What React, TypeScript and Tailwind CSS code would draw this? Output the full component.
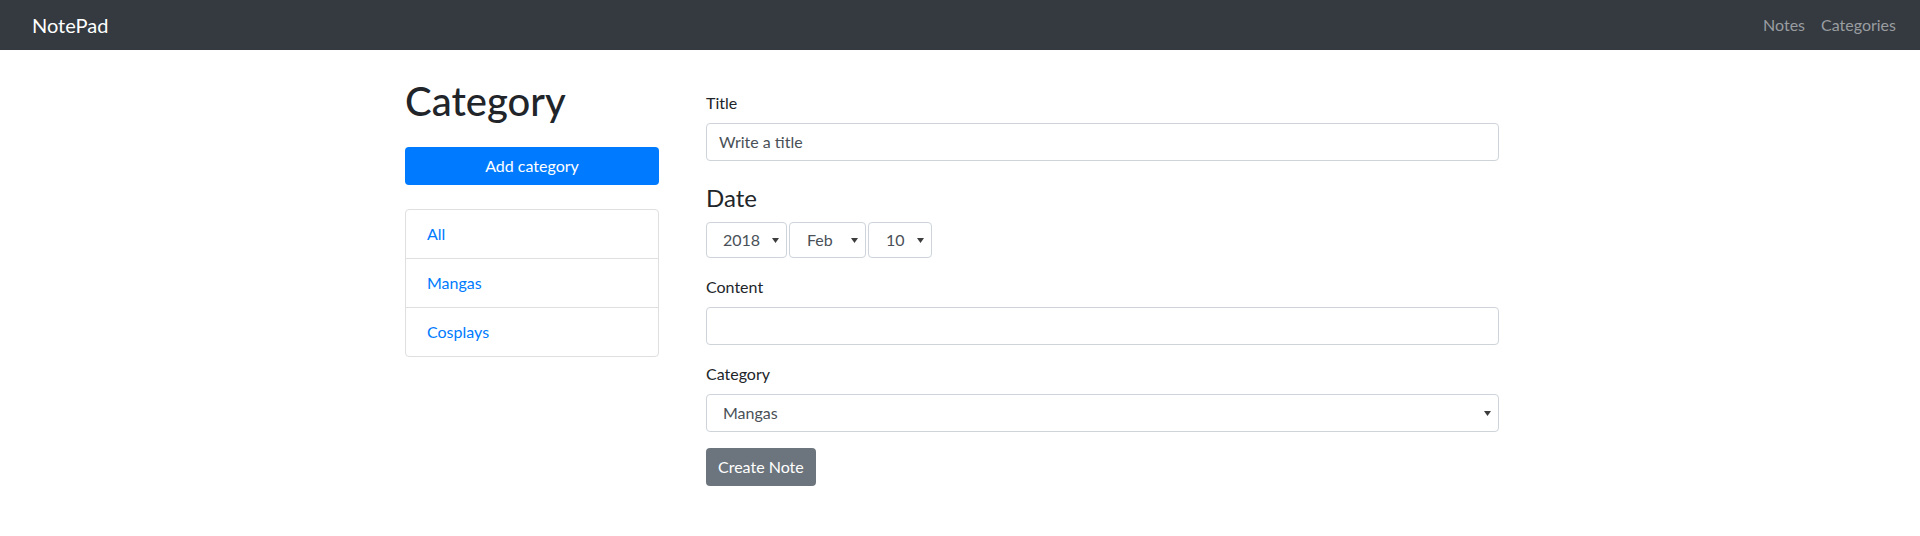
import React from "react";

function Caret() {
  return (
    <svg width="7" height="5" viewBox="0 0 7 5" className="shrink-0">
      <path d="M0 0 L7 0 L3.5 5 Z" fill="#3d3d3d" />
    </svg>
  );
}

function DateSelect({ value, w, textPad }: { value: string; w: string; textPad: string }) {
  return (
    <div className={`${w} h-[36px] border border-[#ced4da] rounded-[4px] flex items-center justify-between pr-[7px] ${textPad} text-[#495057]`}>
      <span>{value}</span>
      <Caret />
    </div>
  );
}

export default function App() {
  return (
    <div className="min-h-[536px] bg-white text-[16px] text-[#212529]" style={{ fontFamily: 'Lato, sans-serif' }}>
      <nav className="h-[50px] bg-[#343a40] flex items-center justify-between pl-[32px] pr-[24px]">
        <span className="text-white text-[20px]">NotePad</span>
        <div className="flex gap-[16px] text-[#9a9da0]">
          <span>Notes</span>
          <span>Categories</span>
        </div>
      </nav>
      <div className="w-[1110px] mx-auto flex">
        <div className="w-[254px] shrink-0">
          <h1 className="text-[40px] leading-[48px] font-medium mt-[27px]">Category</h1>
          <button className="mt-[22px] w-full h-[38px] bg-[#007bff] text-white rounded-[4px]">Add category</button>
          <div className="mt-[24px] border border-[#dfdfdf] rounded-[4px] text-[#007bff]">
            <div className="h-[49px] flex items-center px-[21px] border-b border-[#dfdfdf]">All</div>
            <div className="h-[49px] flex items-center px-[21px] border-b border-[#dfdfdf]">Mangas</div>
            <div className="h-[48px] flex items-center px-[21px]">Cosplays</div>
          </div>
        </div>
        <div className="w-[793px] ml-[47px] pt-[41px]">
          <div className="leading-[24px]">Title</div>
          <div className="mt-[8px] h-[38px] border border-[#ced4da] rounded-[4px] flex items-center px-[12px] text-[#495057]">Write a title</div>
          <h4 className="mt-[22px] text-[24px] leading-[29px] font-normal">Date</h4>
          <div className="mt-[10px] flex gap-[2px]">
            <DateSelect value="2018" w="w-[81px]" textPad="pl-[16px]" />
            <DateSelect value="Feb" w="w-[77px]" textPad="pl-[17px]" />
            <DateSelect value="10" w="w-[64px]" textPad="pl-[17px]" />
          </div>
          <div className="mt-[17px] leading-[24px]">Content</div>
          <div className="mt-[8px] h-[38px] border border-[#ced4da] rounded-[4px]"></div>
          <div className="mt-[17px] leading-[24px]">Category</div>
          <div className="mt-[8px] h-[38px] border border-[#ced4da] rounded-[4px] flex items-center justify-between pl-[16px] pr-[7px] text-[#495057]">
            <span>Mangas</span>
            <Caret />
          </div>
          <button className="mt-[16px] h-[38px] px-[12px] bg-[#6c757d] text-white rounded-[4px]">Create Note</button>
        </div>
      </div>
    </div>
  );
}
